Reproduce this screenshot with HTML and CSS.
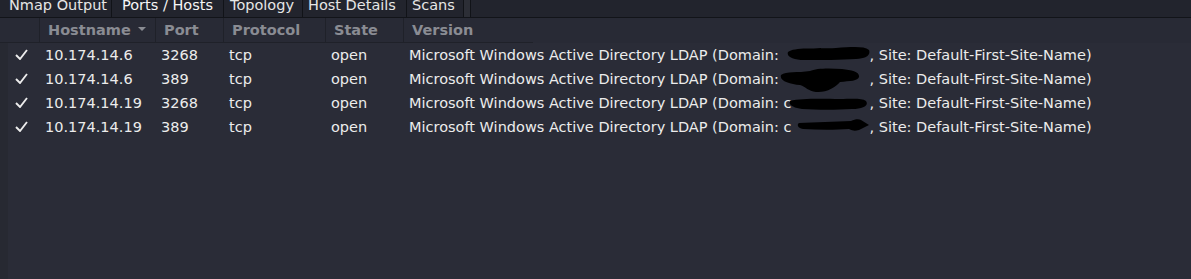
FILE: index.html
```html
<!DOCTYPE html>
<html>
<head>
<meta charset="utf-8">
<link rel="stylesheet" href="styles.css">
</head>
<body>
<div class="tabbar">
  <div class="tab t1">Nmap Output</div>
  <div class="tab t2 active">Ports / Hosts</div>
  <div class="tab t3">Topology</div>
  <div class="tab t4">Host Details</div>
  <div class="tab t5">Scans</div>
  <div class="tab stub"></div>
</div>
<div class="table">
  <div class="thead">
    <div class="th"></div>
    <div class="th">Hostname <svg class="sort" width="8" height="4" viewBox="0 0 8 4"><path d="M0 0H8L4 4Z"/></svg></div>
    <div class="th">Port</div>
    <div class="th">Protocol</div>
    <div class="th">State</div>
    <div class="th last">Version</div>
  </div>
  <div class="tbody">
    <div class="row">
      <div class="td chk"><svg width="13" height="11" viewBox="0 0 13 11"><path d="M1 6 L5 10 L12 1"/></svg></div>
      <div class="td">10.174.14.6</div>
      <div class="td">3268</div>
      <div class="td">tcp</div>
      <div class="td">open</div>
      <div class="td">Microsoft Windows Active Directory LDAP (Domain: <span class="redact"><svg class="blob b1" width="84" height="14" viewBox="0 0 84 14"><path d="M2 6 C8 1 30 3 50 2 C66 1 78 0 83 4 C85 9 80 13 70 13 C55 14 35 14 18 14 C8 14 0 11 2 6Z"/></svg></span>, Site: Default-First-Site-Name)</div>
    </div>
    <div class="row">
      <div class="td chk"><svg width="13" height="11" viewBox="0 0 13 11"><path d="M1 6 L5 10 L12 1"/></svg></div>
      <div class="td">10.174.14.6</div>
      <div class="td">389</div>
      <div class="td">tcp</div>
      <div class="td">open</div>
      <div class="td">Microsoft Windows Active Directory LDAP (Domain: <span class="redact"><svg class="blob b2" width="80" height="25" viewBox="0 0 80 25"><path d="M1 7 C6 3 18 5 30 3 C36 0 50 0 62 1 C72 2 80 4 79 9 C78 13 70 13 60 14 C56 19 46 25 36 24 C28 23 26 19 20 17 C10 16 -1 13 1 7Z"/></svg></span>, Site: Default-First-Site-Name)</div>
    </div>
    <div class="row">
      <div class="td chk"><svg width="13" height="11" viewBox="0 0 13 11"><path d="M1 6 L5 10 L12 1"/></svg></div>
      <div class="td">10.174.14.19</div>
      <div class="td">3268</div>
      <div class="td">tcp</div>
      <div class="td">open</div>
      <div class="td">Microsoft Windows Active Directory LDAP (Domain: <span class="redact">c<svg class="blob b3" width="80" height="13" viewBox="0 0 80 13"><path d="M2 4 C14 1 36 2 52 2 C64 2 74 1 78 4 C81 8 76 12 64 12 C48 13 30 13 14 12 C6 11 0 8 2 4Z"/></svg></span>, Site: Default-First-Site-Name)</div>
    </div>
    <div class="row">
      <div class="td chk"><svg width="13" height="11" viewBox="0 0 13 11"><path d="M1 6 L5 10 L12 1"/></svg></div>
      <div class="td">10.174.14.19</div>
      <div class="td">389</div>
      <div class="td">tcp</div>
      <div class="td">open</div>
      <div class="td">Microsoft Windows Active Directory LDAP (Domain: <span class="redact">c<svg class="blob b4" width="72" height="12" viewBox="0 0 72 12"><path d="M2 4 C18 3 38 3 54 2 C58 0 62 0 64 1 L72 6 L62 11 C58 12 56 12 52 10 C38 11 22 11 6 10 C0 9 0 5 2 4Z"/></svg></span>, Site: Default-First-Site-Name)</div>
    </div>
  </div>
</div>
</body>
</html>
```
FILE: styles.css
```css
html, body {
  margin: 0;
  padding: 0;
  background: #2a2c37;
  font-family: "DejaVu Sans", "Liberation Sans", sans-serif;
  font-size: 14.5px;
  color: #ececec;
  height: 100%;
  overflow: hidden;
}

.tabbar {
  display: flex;
  height: 17px;
  background: #22242d;
  border-bottom: 1px solid #121419;
}

.tab {
  box-sizing: border-box;
  height: 17px;
  line-height: 10px;
  color: #e6e6e6;
  background: #22242d;
  border-right: 1px solid #111318;
  white-space: nowrap;
  overflow: visible;
}

.t1 { width: 112px; padding-left: 9px; }
.t2 { width: 111px; padding-left: 10px; border-right: none; color: #f6f6f6; }
.t3 { width: 80px; padding-left: 6px; border-left: 1px solid #111318; }
.t4 { width: 104px; padding-left: 5px; }
.t5 { width: 57px; padding-left: 5px; }

.tab.stub {
  width: 7px;
  background: #2c2e36;
}

.thead, .row {
  display: grid;
  grid-template-columns: 40px 116px 68px 102px 78px 1fr;
}

.thead {
  height: 25px;
  background: #282a35;
}

.th {
  padding: 1px 0 0 8px;
  line-height: 23px;
  font-weight: bold;
  color: #8a8c93;
  border-right: 1px solid #1f2129;
  border-bottom: 1px solid #1f2129;
  white-space: nowrap;
}

.th.last {
  border-right: none;
  border-bottom: none;
  background: linear-gradient(#1f2129, #1f2129) no-repeat left bottom / 129px 1px;
}

.sort {
  fill: #8a8c93;
  margin-left: 2px;
  vertical-align: 4px;
}

.tbody {
  background: linear-gradient(to right, #272932 0, #272932 8px, #2a2c37 8px);
  height: 240px;
}

.row {
  height: 24px;
  line-height: 24px;
}

.td {
  padding-left: 5px;
  white-space: nowrap;
}

.td.chk {
  padding-left: 15px;
}

.chk svg {
  fill: none;
  stroke: #ececec;
  stroke-width: 1.9;
  vertical-align: 0;
}

.redact {
  position: relative;
  display: inline-block;
  width: 86px;
  height: 24px;
  vertical-align: top;
  line-height: 24px;
}

.blob {
  position: absolute;
  fill: #000000;
}

.b1 { left: 2px; top: 3px; }
.b2 { left: -4px; top: 1px; }
.b3 { left: 4px; top: 6px; }
.b4 { left: 13px; top: 4px; }
```
